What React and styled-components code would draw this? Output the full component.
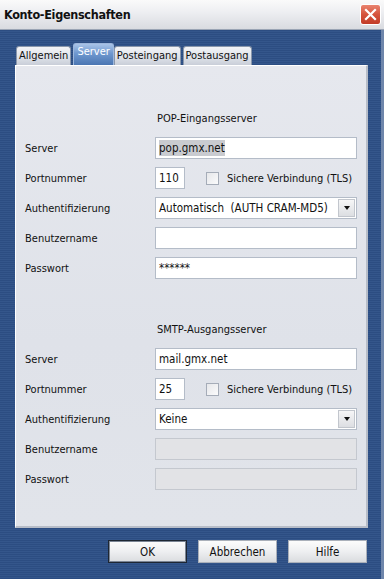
import React from 'react';
import styled, { createGlobalStyle } from 'styled-components';

const GlobalStyle = createGlobalStyle`
    body {
        margin: 0;
        overflow: hidden;
        font-family: "DejaVu Sans", "Liberation Sans", sans-serif;
    }
`

const Window = styled.div`
    width: 384px;
    height: 579px;
    display: flex;
    flex-direction: column;
    box-sizing: border-box;
    border-right: 3px solid #6f86ab;
    background: repeating-linear-gradient(
        to bottom,
        #2c4d82 0px,
        #2c4d82 1px,
        #34568b 1px,
        #34568b 2px
    );
`

const TitleBar = styled.div`
    height: 30px;
    flex: none;
    display: flex;
    align-items: center;
    justify-content: space-between;
    padding: 0 3px 0 4px;
    margin-right: -3px;
    background: linear-gradient(to bottom, #fafafa 0%, #eeeff2 40%, #d9dbe0 100%);
    border-bottom: 1px solid #9aa4b4;
    box-sizing: border-box;
`

const Title = styled.span`
    font-family: "DejaVu Sans Condensed", "DejaVu Sans", sans-serif;
    font-weight: bold;
    font-size: 12.5px;
    letter-spacing: -0.3px;
    color: #111;
`

const CloseBtn = styled.div`
    width: 21px;
    height: 21px;
    border-radius: 3px;
    border: 1px solid #fff;
    background: linear-gradient(to bottom, #e9836f 0%, #d5533c 50%, #c23c28 100%);
    display: flex;
    align-items: center;
    justify-content: center;
    box-sizing: border-box;
`

const Body = styled.div`
    flex: 1;
    display: flex;
    flex-direction: column;
    padding: 13px 13px 0 15px;
`

const TabRow = styled.div`
    display: flex;
    align-items: flex-end;
    height: 22px;
    padding-left: 1px;
    gap: 1px;
`

const Tab = styled.div`
    height: ${p => (p.$active ? '22px' : '19px')};
    box-sizing: border-box;
    padding: ${p => (p.$active ? '1px 3px 0' : '2px 2px 0')};
    margin-right: ${p => (p.$active ? '-1px' : '1px')};
    font-size: 11px;
    font-family: "DejaVu Sans Condensed", "DejaVu Sans", sans-serif;
    color: ${p => (p.$active ? '#fff' : '#111')};
    border: 1px solid ${p => (p.$active ? '#9db7dc' : '#8a97ab')};
    border-bottom: none;
    border-radius: 3px 3px 0 0;
    background: ${p =>
        p.$active
            ? 'linear-gradient(to bottom, #a9c4e8 0%, #6f98cf 45%, #4b76b2 100%)'
            : 'linear-gradient(to bottom, #f3f4f7 0%, #dde1e8 60%, #c9ced8 100%)'};
    white-space: nowrap;
`

const Panel = styled.div`
    height: 463px;
    width: 353px;
    box-sizing: border-box;
    border-top: 1px solid #fff;
    border-left: 1px solid #fff;
    border-right: 2px solid #b7bdc8;
    border-bottom: 2px solid #b7bdc8;
    background: linear-gradient(to bottom, #e6e8ee 0%, #dfe2e9 60%, #e1e4ea 100%);
    padding: 41px 0 0 9px;
`

const Grid = styled.div`
    display: grid;
    grid-template-columns: 130px 202px;
    grid-auto-rows: 22px;
    row-gap: 8px;
    align-items: center;
    font-size: 11px;
    font-family: "DejaVu Sans Condensed", "DejaVu Sans", sans-serif;
    color: #111;
    & + & {
        margin-top: 39px;
    }
`

const Heading = styled.div`
    grid-column: 2;
    padding-left: 2px;
`

const Label = styled.div`
    grid-column: 1;
`

const Field = styled.div`
    height: 22px;
    box-sizing: border-box;
    border: 1px solid ${p => (p.$disabled ? '#c4c8cf' : '#b4bcc8')};
    background: ${p => (p.$disabled ? '#e2e3e6' : '#fff')};
    display: flex;
    align-items: center;
    padding-left: 3px;
    width: ${p => p.$w || '202px'};
    flex: none;
    font-size: 11.5px;
    font-family: "DejaVu Sans Condensed", "DejaVu Sans", sans-serif;
`

const Selected = styled.span`
    background: #c9cbd0;
    padding: 1px 0;
`

const PortCell = styled.div`
    display: flex;
    align-items: center;
    white-space: nowrap;
`

const Check = styled.div`
    width: 13px;
    height: 13px;
    flex: none;
    box-sizing: border-box;
    border: 1px solid #a5acb8;
    background: linear-gradient(135deg, #e6e7ea 0%, #fbfbfc 100%);
    margin: 0 8px 0 21px;
`

const CheckText = styled.span`
    font-size: 11px;
`

const SelectBox = styled(Field)`
    justify-content: space-between;
    padding-right: 1px;
    white-space: pre;
`

const DropBtn = styled.div`
    width: 17px;
    height: 18px;
    box-sizing: border-box;
    border: 1px solid #c2c6cd;
    background: linear-gradient(to bottom, #f6f6f7 0%, #dcdee2 100%);
    display: flex;
    align-items: center;
    justify-content: center;
    &::after {
        content: '';
        border-left: 3.5px solid transparent;
        border-right: 3.5px solid transparent;
        border-top: 4px solid #111;
    }
`

const ButtonRow = styled.div`
    display: flex;
    justify-content: flex-end;
    gap: 11px;
    padding: 12px 1px 0 0;
`

const Button = styled.div`
    width: 79px;
    height: 23px;
    box-sizing: border-box;
    border: 1px solid ${p => (p.$default ? '#1d2633' : '#aab0ba')};
    box-shadow: ${p => (p.$default ? 'inset 0 0 0 1px #7b8594' : 'none')};
    background: linear-gradient(to bottom, #fcfcfc 0%, #eeeff1 50%, #dadcdf 100%);
    display: flex;
    align-items: center;
    justify-content: center;
    font-size: 11.5px;
    font-family: "DejaVu Sans Condensed", "DejaVu Sans", sans-serif;
    color: #111;
`

const Section = ({ title, server, port, auth, authDisabled, password }) => (
    <Grid>
        <Heading>{title}</Heading>
        <Label>Server</Label>
        <Field>{server}</Field>
        <Label>Portnummer</Label>
        <PortCell>
            <Field $w="30px">{port}</Field>
            <Check />
            <CheckText>Sichere Verbindung (TLS)</CheckText>
        </PortCell>
        <Label>Authentifizierung</Label>
        <SelectBox>
            <span>{auth}</span>
            <DropBtn />
        </SelectBox>
        <Label>Benutzername</Label>
        <Field $disabled={authDisabled} />
        <Label>Passwort</Label>
        <Field $disabled={authDisabled}>{password}</Field>
    </Grid>
)

const App = () => {
    return (
        <>
            <GlobalStyle />
            <Window>
                <TitleBar>
                    <Title>Konto-Eigenschaften</Title>
                    <CloseBtn>
                        <svg width="13" height="13" viewBox="0 0 13 13">
                            <path d="M2 2 L11 11 M11 2 L2 11" stroke="#fff" strokeWidth="2.2" strokeLinecap="square" />
                        </svg>
                    </CloseBtn>
                </TitleBar>
                <Body>
                    <TabRow>
                        <Tab>Allgemein</Tab>
                        <Tab $active>Server</Tab>
                        <Tab>Posteingang</Tab>
                        <Tab>Postausgang</Tab>
                    </TabRow>
                    <Panel>
                        <Section
                            title="POP-Eingangsserver"
                            server={<Selected>pop.gmx.net</Selected>}
                            port="110"
                            auth="Automatisch  (AUTH CRAM-MD5)"
                            password="******"
                        />
                        <Section
                            title="SMTP-Ausgangsserver"
                            server="mail.gmx.net"
                            port="25"
                            auth="Keine"
                            authDisabled
                        />
                    </Panel>
                    <ButtonRow>
                        <Button $default>OK</Button>
                        <Button>Abbrechen</Button>
                        <Button>Hilfe</Button>
                    </ButtonRow>
                </Body>
            </Window>
        </>
    );
};

export default App;
